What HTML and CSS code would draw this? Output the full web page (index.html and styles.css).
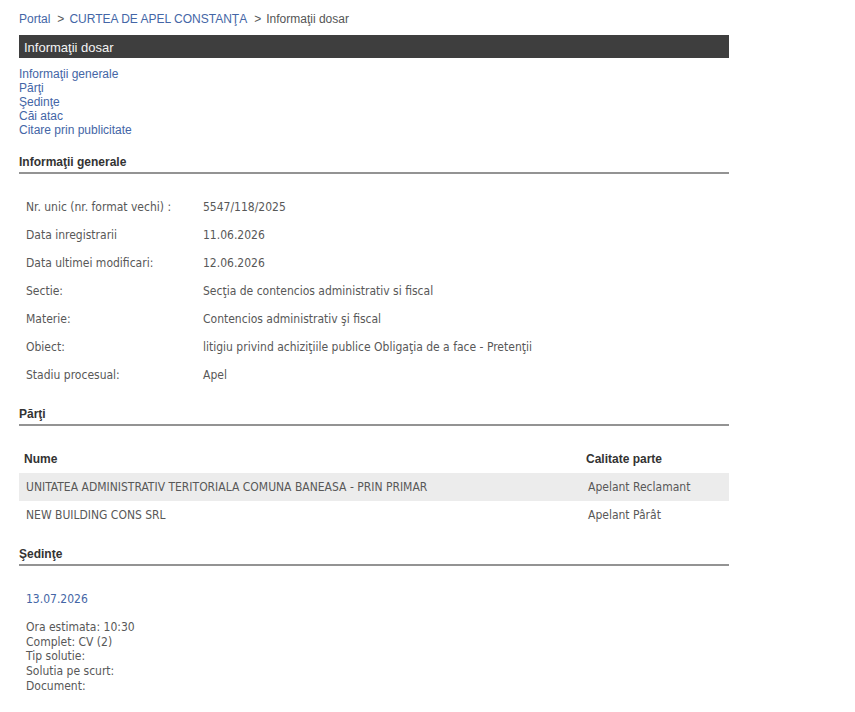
FILE: index.html
```html
<!DOCTYPE html>
<html>
<head>
<meta charset="utf-8">
<title>Informaţii dosar</title>
<link rel="stylesheet" href="styles.css">
</head>
<body>

<div class="page">
	<div class="breadcrumb">
		<a href="#">Portal</a><span class="sep">&gt;</span><a href="#">CURTEA DE APEL CONSTANŢA</a><span class="sep">&gt;</span><span>Informaţii dosar</span>
	</div>

	<div class="title-bar">Informaţii dosar</div>

	<ul class="toc">
		<li><a href="#generale">Informaţii generale</a></li>
		<li><a href="#parti">Părţi</a></li>
		<li><a href="#sedinte">Şedinţe</a></li>
		<li><a href="#cai">Căi atac</a></li>
		<li><a href="#citare">Citare prin publicitate</a></li>
	</ul>

	<h3 class="section" id="generale">Informaţii generale</h3>
	<table class="details">
		<colgroup><col class="label-col"><col></colgroup>
		<tr><td>Nr. unic (nr. format vechi) :</td><td>5547/118/2025</td></tr>
		<tr><td>Data inregistrarii</td><td>11.06.2026</td></tr>
		<tr><td>Data ultimei modificari:</td><td>12.06.2026</td></tr>
		<tr><td>Sectie:</td><td>Secţia de contencios administrativ si fiscal</td></tr>
		<tr><td>Materie:</td><td>Contencios administrativ şi fiscal</td></tr>
		<tr><td>Obiect:</td><td>litigiu privind achiziţiile publice Obligaţia de a face - Pretenţii</td></tr>
		<tr><td>Stadiu procesual:</td><td>Apel</td></tr>
	</table>

	<h3 class="section" id="parti">Părţi</h3>
	<table class="parties">
		<colgroup><col><col class="role-col"></colgroup>
		<tr><th>Nume</th><th>Calitate parte</th></tr>
		<tr class="alt"><td>UNITATEA ADMINISTRATIV TERITORIALA COMUNA BANEASA - PRIN PRIMAR</td><td>Apelant Reclamant</td></tr>
		<tr><td>NEW BUILDING CONS SRL</td><td>Apelant Pârât</td></tr>
	</table>

	<h3 class="section" id="sedinte">Şedinţe</h3>
	<div class="session">
		<div class="session-date">13.07.2026</div>
		<div>Ora estimata: 10:30</div>
		<div>Complet: CV (2)</div>
		<div>Tip solutie:</div>
		<div>Solutia pe scurt:</div>
		<div>Document:</div>
	</div>
</div>

</body>
</html>
```

FILE: styles.css
```css
* {
	box-sizing: border-box;
}

body, ul, li, h3, table {
	padding: 0;
	margin: 0;
	border: 0;
}

body {
	background: #fff;
	font-size: 12px;
	font-family: "Liberation Sans", Arial, sans-serif;
	color: #555;
}

a {
	color: #4466a6;
	text-decoration: none;
}

.page {
	width: 729px;
	padding: 12px 0 20px 19px;
}

.breadcrumb {
	line-height: 14px;
	color: #555;
}

.breadcrumb .sep {
	margin: 0 5px 0 7px;
}

.title-bar {
	margin-top: 9px;
	height: 23px;
	padding: 2px 0 0 5px;
	line-height: 21px;
	background: #3e3e3e;
	color: #f4f4f4;
	font-size: 13px;
}

.toc {
	list-style: none;
	margin-top: 9px;
	line-height: 14px;
}

.section {
	margin-top: 18px;
	padding-bottom: 3px;
	line-height: 14px;
	font-size: 12px;
	font-weight: bold;
	color: #333;
	border-bottom: 2px solid #939393;
}

/* tables use a Tahoma-like face, the rest of the page is Arial */
.details,
.parties {
	width: 100%;
	table-layout: fixed;
	border-collapse: collapse;
	margin-top: 19px;
	font-family: "DejaVu Sans Condensed", "DejaVu Sans", sans-serif;
	font-size: 12px;
	color: #585858;
}

.details .label-col {
	width: 177px;
}

.parties .role-col {
	width: 148px;
}

.details td,
.parties td,
.parties th {
	height: 28px;
	padding: 0 0 0 7px;
	vertical-align: middle;
	text-align: left;
	white-space: nowrap;
}

.parties th {
	padding-left: 5px;
	font-family: "Liberation Sans", Arial, sans-serif;
	font-weight: bold;
	color: #333;
}

.parties .alt td {
	background: #ececec;
}

.session {
	padding: 26px 7px 0;
	font-family: "DejaVu Sans Condensed", "DejaVu Sans", sans-serif;
	font-size: 12px;
	line-height: 14.75px;
	color: #585858;
}

.session-date {
	margin-bottom: 13px;
	color: #4466a6;
}
```
